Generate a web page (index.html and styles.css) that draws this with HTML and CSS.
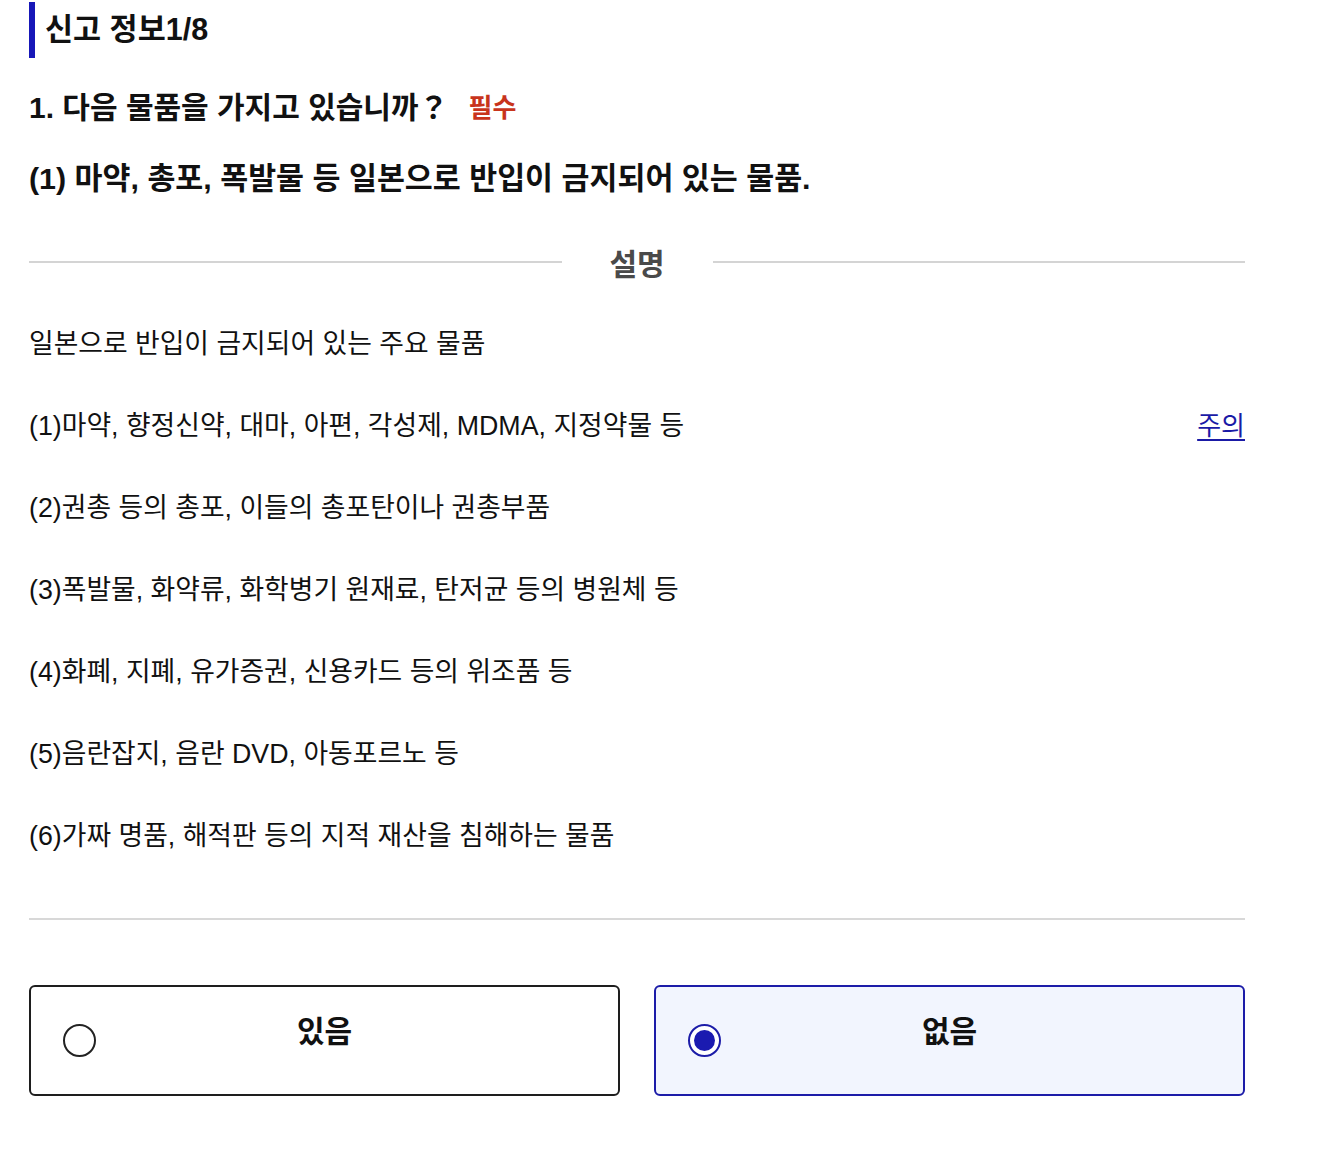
FILE: index.html
```html
<!DOCTYPE html>
<html lang="ko">
<head>
<meta charset="utf-8">
<title>신고 정보</title>
<link rel="stylesheet" href="styles.css">
</head>
<body>
<main class="page">
  <h1 class="section-title">신고 정보1/8</h1>
  <h2 class="question">1. 다음 물품을 가지고 있습니까？<span class="required">필수</span></h2>
  <h3 class="sub-question">(1) 마약, 총포, 폭발물 등 일본으로 반입이 금지되어 있는 물품.</h3>
  <div class="divider-title"><span class="line"></span><span class="divider-label">설명</span><span class="line"></span></div>
  <div class="desc">
    <p class="desc-row">일본으로 반입이 금지되어 있는 주요 물품</p>
    <p class="desc-row"><span>(1)마약, 향정신약, 대마, 아편, 각성제, MDMA, 지정약물 등</span><a class="note-link" href="#">주의</a></p>
    <p class="desc-row">(2)권총 등의 총포, 이들의 총포탄이나 권총부품</p>
    <p class="desc-row">(3)폭발물, 화약류, 화학병기 원재료, 탄저균 등의 병원체 등</p>
    <p class="desc-row">(4)화폐, 지폐, 유가증권, 신용카드 등의 위조품 등</p>
    <p class="desc-row">(5)음란잡지, 음란 DVD, 아동포르노 등</p>
    <p class="desc-row">(6)가짜 명품, 해적판 등의 지적 재산을 침해하는 물품</p>
  </div>
  <hr class="rule">
  <div class="choices">
    <label class="choice">
      <span class="radio"></span>
      <span class="choice-text">있음</span>
    </label>
    <label class="choice selected">
      <span class="radio"></span>
      <span class="choice-text">없음</span>
    </label>
  </div>
</main>
</body>
</html>
```
FILE: styles.css
```css
* { box-sizing: border-box; }
body {
  margin: 0;
  background: #fff;
  color: #111;
  font-family: "Liberation Sans", "Noto Sans CJK KR", sans-serif;
}
.page {
  width: 1245px;
  padding: 2px 0 0 29px;
}
.section-title {
  margin: 0;
  height: 56px;
  line-height: 54px;
  border-left: 6px solid #1717b8;
  padding-left: 10px;
  font-size: 30.5px;
  font-weight: 700;
}
.question {
  margin: 30px 0 0;
  font-size: 30px;
  line-height: 40px;
  font-weight: 700;
  display: flex;
  align-items: center;
}
.required {
  color: #c8341c;
  font-size: 26px;
  margin-left: 20px;
}
.sub-question {
  margin: 30px 0 0;
  font-size: 30.4px;
  line-height: 40px;
  font-weight: 700;
}
.divider-title {
  margin-top: 44px;
  display: flex;
  align-items: center;
  height: 40px;
}
.line {
  flex: 1;
  height: 2px;
  background: #d4d4d4;
}
.divider-label {
  width: 151px;
  text-align: center;
  font-size: 30px;
  font-weight: 700;
  color: #4a4a4a;
}
.desc {
  margin-top: 43px;
  display: flex;
  flex-direction: column;
  gap: 44px;
}
.desc-row {
  margin: 0;
  height: 38px;
  line-height: 38px;
  font-size: 26.8px;
  display: flex;
  justify-content: space-between;
  align-items: center;
}
.note-link {
  color: #1a1aa6;
  font-size: 26px;
  text-decoration: underline;
  text-underline-offset: 4px;
}
.rule {
  margin: 63px 0 0;
  border: 0;
  height: 2px;
  background: #d8d8d8;
}
.choices {
  margin-top: 65px;
  display: grid;
  grid-template-columns: 1fr 1fr;
  gap: 34px;
}
.choice {
  position: relative;
  height: 111px;
  border: 2px solid #1e1e1e;
  border-radius: 6px;
  display: flex;
  justify-content: center;
  padding-top: 25px;
}
.choice-text {
  font-size: 30px;
  font-weight: 700;
  line-height: 40px;
}
.radio {
  position: absolute;
  left: 32px;
  top: 37px;
  width: 33px;
  height: 33px;
  border: 2px solid #222;
  border-radius: 50%;
  background: #fff;
}
.choice.selected {
  border-color: #1c1ca8;
  background: #f2f5fe;
}
.choice.selected .radio {
  border-color: #1c1ca8;
}
.choice.selected .radio::after {
  content: "";
  position: absolute;
  inset: 4px;
  border-radius: 50%;
  background: #1a1ab0;
}
```
